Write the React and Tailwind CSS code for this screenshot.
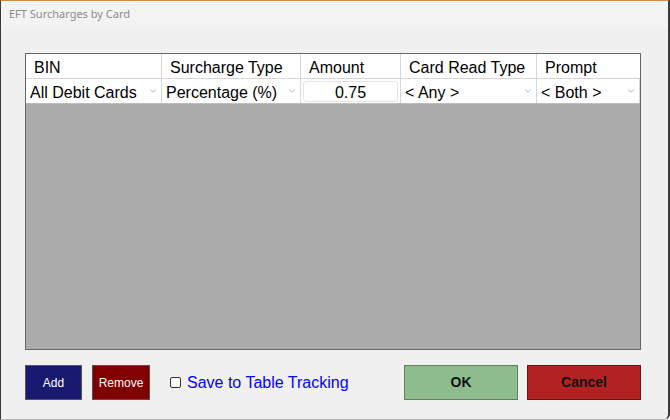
import { ChevronDown } from "lucide-react";

const columns = [
  { label: "BIN", width: "w-[136px]" },
  { label: "Surcharge Type", width: "w-[139px]" },
  { label: "Amount", width: "w-[100px]" },
  { label: "Card Read Type", width: "w-[136px]" },
  { label: "Prompt", width: "flex-1" },
];

function Combo({ value, width }) {
  return (
    <div className={`${width} h-full flex items-center bg-white border-r border-[#d6d6d6] pl-[4px] pr-[3px]`}>
      <span className="flex-1 truncate pt-[3px]">{value}</span>
      <ChevronDown className="w-[10px] h-[10px] text-[#8a8a8a]" strokeWidth={1.5} />
    </div>
  );
}

export default function App() {
  return (
    <div className="w-[670px] h-[420px] bg-[#f0f0f0] flex flex-col border-l border-r-2 border-[#3a3a3a] border-t border-t-[#d08a4a] border-b border-b-[#b0b0b0] rounded-br-[6px] overflow-hidden font-['Liberation_Sans',Arial,sans-serif] text-[16px] text-black">
      <div className="h-[26px] bg-[#f3f3f3] pl-[8px] flex items-center text-[11px] text-[#8c8c8c] font-['Noto_Sans',sans-serif]">
        EFT Surcharges by Card
      </div>

      <div className="flex-1 flex flex-col pl-[24px] pr-[27px] pt-[26px]">
        <div className="h-[297px] border border-[#666] flex flex-col bg-[#ababab]">
          <div className="h-[25px] flex bg-white border-b border-[#d6d6d6]">
            {columns.map((c) => (
              <div key={c.label} className={`${c.width} flex items-center pl-[8px] pt-[3px] border-r border-[#d6d6d6] last:border-r-0`}>
                {c.label}
              </div>
            ))}
          </div>
          <div className="h-[25px] flex bg-white border-b border-[#bdbdbd]">
            <Combo value="All Debit Cards" width="w-[136px]" />
            <Combo value="Percentage (%)" width="w-[139px]" />
            <div className="w-[100px] h-full flex items-center px-[2px] border-r border-[#d6d6d6]">
              <div className="w-full h-[21px] border border-[#e3e3e3] rounded-[3px] flex items-center justify-center pt-[3px]">
                0.75
              </div>
            </div>
            <Combo value="< Any >" width="w-[136px]" />
            <Combo value="< Both >" width="flex-1" />
          </div>
        </div>

        <div className="flex items-center mt-[15px] h-[35px]">
          <button className="w-[57px] h-full bg-[#191970] border border-[#555] text-white text-[12px]">
            Add
          </button>
          <button className="ml-[10px] w-[58px] h-full bg-[#800000] border border-[#555] text-white text-[12px]">
            Remove
          </button>
          <label className="ml-[20px] flex items-center gap-[6px] text-[#0000ff]">
            <span className="w-[11px] h-[11px] border border-[#333] rounded-[2px] bg-white" />
            Save to Table Tracking
          </label>
          <button className="ml-auto w-[114px] h-full bg-[#8fbc8f] border border-[#5e7e5e] font-bold text-[14px] text-[#111]">
            OK
          </button>
          <button className="ml-[9px] w-[114px] h-full bg-[#b22222] border border-[#6a1414] font-bold text-[14px] text-[#111]">
            Cancel
          </button>
        </div>
      </div>
    </div>
  );
}
